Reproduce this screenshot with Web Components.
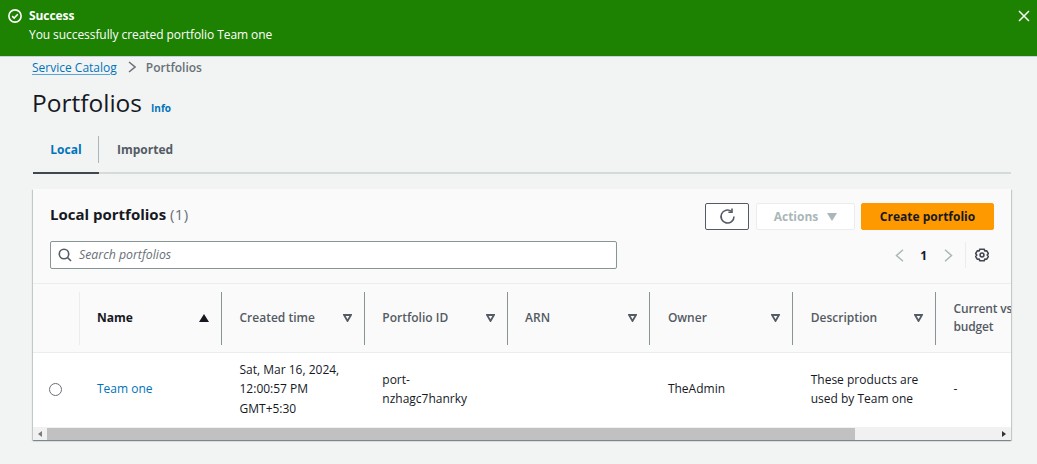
<!DOCTYPE html>
<html lang="en">
<head>
<meta charset="utf-8">
<title>Portfolios</title>
<style>
  html, body { margin: 0; padding: 0; }
  body {
    background: #f2f3f3;
    color: #16191f;
    font-family: "Open Sans", "Liberation Sans", sans-serif;
    font-size: 13px;
    overflow: hidden;
    height: 464px;
  }
  main { display: block; padding: 0 26px 0 33px; }
</style>
</head>
<body>
<flash-bar heading="Success">You successfully created portfolio Team one</flash-bar>
<main>
  <bread-crumbs current="Portfolios">Service Catalog</bread-crumbs>
  <page-title>Portfolios</page-title>
  <tab-bar></tab-bar>
  <portfolio-card></portfolio-card>
</main>

<script>
class FlashBar extends HTMLElement {
  constructor() {
    super();
    const root = this.attachShadow({ mode: 'open' });
    root.innerHTML = `
    <style>
      :host {
        display: flex;
        box-sizing: border-box;
        height: 57px;
        padding: 6px 7px 0 8px;
        gap: 7px;
        background: #1d8102;
        border-bottom: 1px solid #c5d3dc;
        color: #fff;
        font-size: 12px;
        line-height: 19px;
        letter-spacing: -0.07px;
      }
      svg { display: block; flex: none; }
      .check { margin-top: 3px; }
      .txt { flex: 1; }
      b { display: block; font-weight: 700; }
    </style>
    <svg class="check" width="14" height="14" viewBox="0 0 16 16" fill="none" stroke="#fff" stroke-width="1.8">
      <circle cx="8" cy="8" r="7"/><path d="M4.8 8.2l2.2 2.2 4.2-4.4"/>
    </svg>
    <div class="txt"><b>${this.getAttribute('heading')}</b><slot></slot></div>
    <svg width="12" height="12" viewBox="0 0 12 12" fill="none" stroke="#fff" stroke-width="1.5" style="margin-top:4px">
      <path d="M1 1l10 10M11 1L1 11"/>
    </svg>`;
  }
}
customElements.define('flash-bar', FlashBar);

class BreadCrumbs extends HTMLElement {
  constructor() {
    super();
    const root = this.attachShadow({ mode: 'open' });
    root.innerHTML = `
    <style>
      :host {
        display: flex;
        align-items: center;
        height: 20px;
        margin-left: -1px;
        font-size: 12px;
      }
      a { color: #0073bb; text-decoration: underline; text-decoration-color: #5aa5d6; text-underline-offset: 2px; }
      svg { margin: 0 10px 0 11px; }
      b { font-weight: 600; color: #687078; }
    </style>
    <a href="#"><slot></slot></a>
    <svg width="8" height="12" viewBox="0 0 8 12" fill="none" stroke="#687078" stroke-width="1.5"><path d="M1 1l6 5-6 5"/></svg>
    <b>${this.getAttribute('current')}</b>`;
  }
}
customElements.define('bread-crumbs', BreadCrumbs);

class PageTitle extends HTMLElement {
  constructor() {
    super();
    const root = this.attachShadow({ mode: 'open' });
    root.innerHTML = `
    <style>
      :host {
        display: flex;
        align-items: baseline;
        gap: 9px;
        margin: 5px 0 0 -1px;
        height: 42px;
        line-height: 42px;
      }
      h1 { margin: 0; font-size: 24.5px; font-weight: 400; color: #16191f; }
      a { font-size: 10px; font-weight: 700; color: #0073bb; text-decoration: none; }
    </style>
    <h1><slot></slot></h1><a href="#">Info</a>`;
  }
}
customElements.define('page-title', PageTitle);

class TabBar extends HTMLElement {
  constructor() {
    super();
    const root = this.attachShadow({ mode: 'open' });
    root.innerHTML = `
    <style>
      :host {
        display: flex;
        box-sizing: border-box;
        height: 42px;
        margin-top: 8px;
        border-bottom: 2px solid #d5dbdb;
        font-size: 12px;
        font-weight: 700;
      }
      .tab { display: flex; align-items: center; height: 40px; padding-bottom: 6px; box-sizing: border-box; }
      .on {
        width: 66px;
        justify-content: center;
        color: #0073bb;
        box-shadow: 0 2px 0 #414750;
        position: relative;
      }
      .on::after {
        content: "";
        position: absolute;
        right: 0;
        top: 4px;
        height: 27px;
        border-right: 1px solid #aab7b8;
      }
      .off { padding-left: 18px; color: #545b64; }
    </style>
    <div class="tab on">Local</div>
    <div class="tab off">Imported</div>`;
  }
}
customElements.define('tab-bar', TabBar);

class PortfolioTable extends HTMLElement {
  constructor() {
    super();
    const root = this.attachShadow({ mode: 'open' });
    const cols = [
      ['Created time', 'Sat, Mar 16, 2024,<br>12:00:57 PM<br>GMT+5:30'],
      ['Portfolio ID', 'port-<br>nzhagc7hanrky'],
      ['ARN', ''],
      ['Owner', 'TheAdmin'],
      ['Description', 'These products are<br>used by Team one']
    ];
    const caret = `<svg width="9" height="8" viewBox="0 0 9 8" fill="none" stroke="#545b64" stroke-width="1.8"><path d="M1 1h7L4.500 7z"/></svg>`;
    const heads = cols.map(c => `<div class="th"><span>${c[0]}</span>${caret}</div>`).join('');
    const cells = cols.map(c => `<div class="td">${c[1]}</div>`).join('');
    root.innerHTML = `
    <style>
      :host { display: block; overflow: hidden; font-size: 12px; }
      .grid {
        display: grid;
        grid-template-columns: 46px 142px repeat(5, 142.800px) 120px;
        width: 1000px;
      }
      .th {
        display: flex;
        align-items: center;
        justify-content: space-between;
        box-sizing: border-box;
        height: 70px;
        padding: 0 12px 1px 18.500px;
        background: #fafafa;
        border-top: 1px solid #eaeded;
        border-bottom: 1px solid #eaeded;
        color: #545b64;
        font-weight: 600;
        line-height: 18px;
        position: relative;
      }
      .th::before {
        content: "";
        position: absolute;
        left: 0;
        top: 8px;
        bottom: 7px;
        border-left: 1px solid #879596;
      }
      .th.sel::before, .th.name::before { border-left-color: #eaeded; }
      .th.sel { padding: 0; }
      .th.sel::before { display: none; }
      .th.name { color: #16191f; padding-left: 18px; font-weight: 700; }
      .th.last { padding-right: 0; white-space: nowrap; letter-spacing: -0.15px; }
      .td {
        display: flex;
        align-items: center;
        box-sizing: border-box;
        height: 74px;
        padding: 0 0 2px 18.500px;
        background: #fff;
        color: #16191f;
        line-height: 19.500px;
        white-space: nowrap;
      }
      .td.sel { padding: 0 0 1px 16px; }
      .td.name { padding-left: 18px; }
      .radio { width: 11px; height: 11px; border: 1px solid #687078; border-radius: 50%; }
      a { color: #0073bb; text-decoration: none; }
      .bar { display: flex; align-items: center; height: 13px; background: #f1f1f1; }
      .arrow { flex: none; width: 14px; display: flex; justify-content: center; }
      .thumb { width: 808px; height: 12px; background: #c1c1c1; }
      .rest { flex: 1; }
    </style>
    <div class="grid">
      <div class="th sel"></div>
      <div class="th name"><span>Name</span><svg width="10" height="8" viewBox="0 0 10 8"><path d="M5 0l5 8H0z" fill="#16191f"/></svg></div>
      ${heads}
      <div class="th last"><span>Current vs<br>budget</span></div>
      <div class="td sel"><div class="radio"></div></div>
      <div class="td name"><a href="#">Team one</a></div>
      ${cells}
      <div class="td">-</div>
    </div>
    <div class="bar">
      <div class="arrow"><svg width="4" height="6" viewBox="0 0 4 6"><path d="M4 0v6L0 3z" fill="#7a7a7a"/></svg></div>
      <div class="thumb"></div>
      <div class="rest"></div>
      <div class="arrow"><svg width="4" height="6" viewBox="0 0 4 6"><path d="M0 0v6l4-3z" fill="#333"/></svg></div>
    </div>`;
  }
}
customElements.define('portfolio-table', PortfolioTable);

class PortfolioCard extends HTMLElement {
  constructor() {
    super();
    const root = this.attachShadow({ mode: 'open' });
    root.innerHTML = `
    <style>
      :host {
        display: block;
        margin-top: 15px;
        background: #fafafa;
        box-shadow: 0 1px 1px 0 rgba(0,28,36,.3), 1px 1px 1px 0 rgba(0,28,36,.15), -1px 1px 1px 0 rgba(0,28,36,.15);
      }
      header { padding: 14px 17px 14px 17px; }
      .top { display: flex; align-items: flex-start; height: 28px; }
      h2 { flex: 1; margin: 0; font-size: 15px; line-height: 22px; font-weight: 700; color: #16191f; }
      h2 span { font-weight: 400; color: #687078; letter-spacing: .4px; }
      .btn {
        display: flex;
        align-items: center;
        justify-content: center;
        box-sizing: border-box;
        height: 27px;
        border: 1px solid #545b64;
        border-radius: 2px;
        background: #fff;
        font-size: 12px;
        font-weight: 700;
      }
      .refresh { width: 44px; margin-right: 7px; }
      .actions { width: 99px; margin-right: 6px; gap: 9px; border-color: #eaeded; color: #aab7b8; }
      .create { width: 133px; border-color: #ff9900; background: #ff9900; color: #16191f; }
      .bottom { display: flex; align-items: center; height: 28px; margin-top: 10px; }
      .search {
        display: flex;
        align-items: center;
        gap: 7px;
        box-sizing: border-box;
        width: 567px;
        height: 28px;
        padding: 0 7px 1px;
        background: #fff;
        border: 1px solid #879596;
        border-radius: 2px;
        color: #687078;
        font-size: 12.300px;
        font-style: italic;
      }
      .pager { display: flex; align-items: center; margin-left: auto; margin-right: 5px; }
      .pager b { margin: 0 17px 0 16px; font-size: 12px; color: #16191f; }
      .sep { height: 26px; margin: 0 9px 0 12px; border-left: 1px solid #eaeded; }
    </style>
    <header>
      <div class="top">
        <h2>Local portfolios <span>(1)</span></h2>
        <div class="btn refresh">
          <svg width="17" height="17" viewBox="0 0 17 17" fill="none" stroke="#545b64" stroke-width="1.600">
            <path d="M15 8.500A6.500 6.500 0 1 1 12.500 3.400"/><path d="M13 .6v3.600H9.400"/>
          </svg>
        </div>
        <div class="btn actions">Actions
          <svg width="10" height="8" viewBox="0 0 10 8"><path d="M0 0h10L5 8z" fill="#aab7b8"/></svg>
        </div>
        <div class="btn create">Create portfolio</div>
      </div>
      <div class="bottom">
        <div class="search">
          <svg width="14" height="14" viewBox="0 0 14 14" fill="none" stroke="#545b64" stroke-width="1.600">
            <circle cx="6" cy="6" r="4.700"/><path d="M9.500 9.500L13 13"/>
          </svg>
          Search portfolios
        </div>
        <div class="pager">
          <svg width="9" height="13" viewBox="0 0 9 13" fill="none" stroke="#aab7b8" stroke-width="1.500"><path d="M8 .8L1.500 6.500 8 12.200"/></svg>
          <b>1</b>
          <svg width="9" height="13" viewBox="0 0 9 13" fill="none" stroke="#aab7b8" stroke-width="1.500"><path d="M1 .8L7.500 6.500 1 12.200"/></svg>
          <div class="sep"></div>
          <svg width="14" height="14" viewBox="0 0 16 16" fill="none" stroke="#414750" stroke-width="1.800">
            <circle cx="8" cy="8" r="2.200"/>
            <path d="M5.500 1.500h5l.8 1.800 2-.2 2 3.300L14 8l1.300 1.600-2 3.300-2-.2-.8 1.800h-5l-.8-1.800-2 .2-2-3.300L2 8 .7 6.400l2-3.300 2 .2z"/>
          </svg>
        </div>
      </div>
    </header>
    <portfolio-table></portfolio-table>`;
  }
}
customElements.define('portfolio-card', PortfolioCard);
</script>
</body>
</html>
